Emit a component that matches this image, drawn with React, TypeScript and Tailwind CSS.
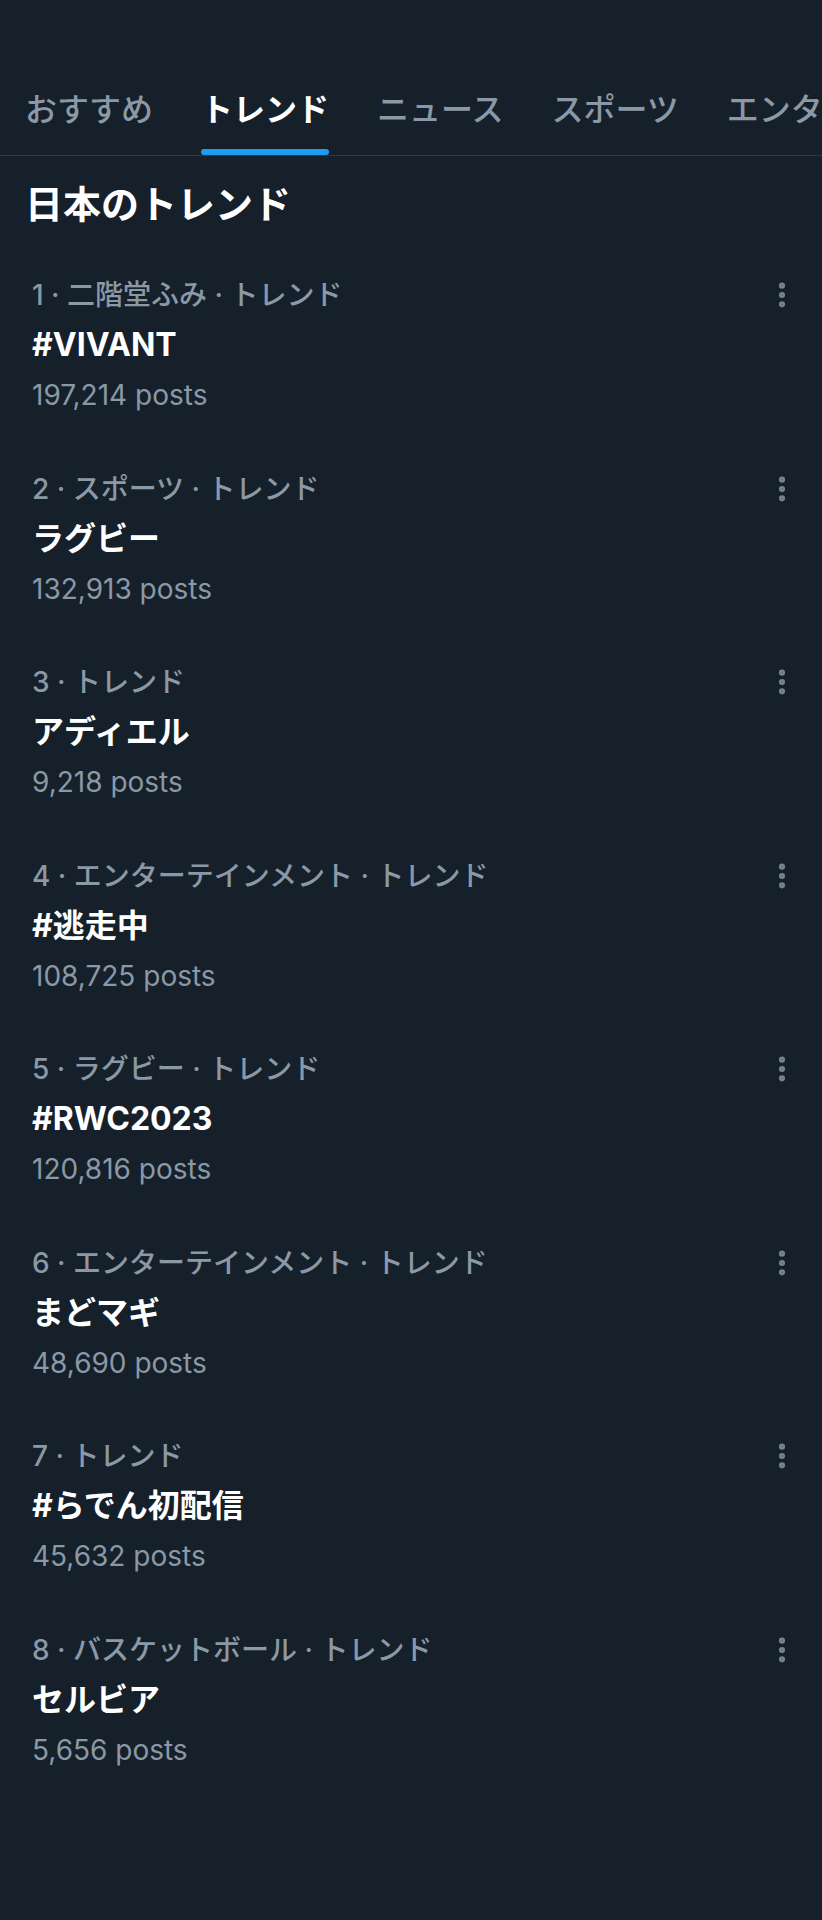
import { MoreVertical } from "lucide-react";

const tabs = [
  { label: "おすすめ", active: false },
  { label: "トレンド", active: true },
  { label: "ニュース", active: false },
  { label: "スポーツ", active: false },
  { label: "エンターテインメント", active: false },
];

const trends = [
  { rank: 1, category: "二階堂ふみ", title: "#VIVANT", posts: "197,214" },
  { rank: 2, category: "スポーツ", title: "ラグビー", posts: "132,913" },
  { rank: 3, category: null, title: "アディエル", posts: "9,218" },
  { rank: 4, category: "エンターテインメント", title: "#逃走中", posts: "108,725" },
  { rank: 5, category: "ラグビー", title: "#RWC2023", posts: "120,816" },
  { rank: 6, category: "エンターテインメント", title: "まどマギ", posts: "48,690" },
  { rank: 7, category: null, title: "#らでん初配信", posts: "45,632" },
  { rank: 8, category: "バスケットボール", title: "セルビア", posts: "5,656" },
];

function TrendRow({ trend }: { trend: (typeof trends)[0] }) {
  const meta = trend.category
    ? `${trend.rank} · ${trend.category} · トレンド`
    : `${trend.rank} · トレンド`;

  return (
    <div className="flex h-[193.5px] pl-[32px] pr-[24px] pt-[22px]">
      <div className="flex-1 min-w-0">
        <div className="text-[28px] leading-[50px] font-medium text-[#8b98a5] whitespace-nowrap">
          {meta}
        </div>
        <div className="text-[32px] leading-[50px] font-bold text-white whitespace-nowrap">
          {trend.title}
        </div>
        <div className="text-[28px] leading-[50px] text-[#8b98a5] whitespace-nowrap">
          {trend.posts} posts
        </div>
      </div>
      {/* overflow menu */}
      <div className="h-[50px] flex items-center text-[#76838f]">
        <MoreVertical size={32} strokeWidth={2.6} />
      </div>
    </div>
  );
}

export default function App() {
  return (
    <div
      className="w-[822px] h-[1920px] overflow-hidden bg-[#15202b]"
      style={{ fontFamily: 'Inter, "Noto Sans CJK JP", sans-serif' }}
    >
      {/* ── Tab bar ── */}
      <div className="h-[156px] border-b border-[#2f3943] flex items-end gap-[48px] pl-[25px] overflow-hidden">
        {tabs.map((tab) => (
          <div key={tab.label} className="flex flex-col flex-shrink-0">
            <span
              className={
                tab.active
                  ? "text-[32px] leading-[40px] font-bold text-white whitespace-nowrap"
                  : "text-[32px] leading-[40px] font-medium text-[#8b98a5] whitespace-nowrap"
              }
            >
              {tab.label}
            </span>
            <div
              className={
                tab.active
                  ? "mt-[19px] h-[6px] rounded-full bg-[#1d9bf0]"
                  : "mt-[19px] h-[6px] rounded-full bg-transparent"
              }
            />
          </div>
        ))}
      </div>

      {/* ── Section header ── */}
      <h2 className="pl-[25px] pt-[24px] text-[38px] leading-[48px] font-bold text-white">
        日本のトレンド
      </h2>

      {/* ── Trend list ── */}
      <div className="mt-[20px]">
        {trends.map((t) => (
          <TrendRow key={t.rank} trend={t} />
        ))}
      </div>
    </div>
  );
}
